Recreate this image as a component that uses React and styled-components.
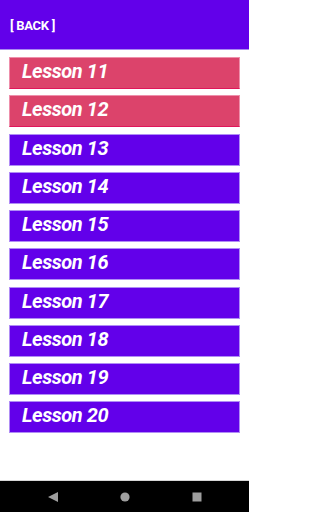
import React from 'react'
import styled, { createGlobalStyle } from 'styled-components'

const GlobalStyle = createGlobalStyle`
  html, body {
    margin: 0;
    padding: 0;
    background: #ffffff;
  }
  body {
    font-family: Roboto, "Noto Sans", sans-serif;
  }
`;

const Screen = styled.div`
  width: 249px;
  height: 512px;
  display: flex;
  flex-direction: column;
  background: #ffffff;
  overflow: hidden;
`;

const Header = styled.div`
  height: 50px;
  flex-shrink: 0;
  background: #6200ea;
  display: flex;
  align-items: center;
  padding-left: 10px;
  border-bottom: 1px solid #a98af0;
  box-sizing: border-box;
`;

const BackButton = styled.span`
  color: #ffffff;
  font-size: 13px;
  font-weight: 700;
  letter-spacing: -0.3px;
  margin-top: 1px;
`;

const List = styled.div`
  flex: 1;
  display: flex;
  flex-direction: column;
  gap: 6.25px;
  padding: 7px 9px 0 9px;
`;

const Lesson = styled.div`
  height: 32px;
  box-sizing: border-box;
  background: ${p => (p.done ? '#dc436b' : '#6200ea')};
  border: 1px solid ${p => (p.done ? '#ee8fab' : '#b08df5')};
  border-bottom-color: ${p => (p.done ? '#e0165a' : '#b08df5')};
  display: flex;
  align-items: center;
  padding: 0 0 4px 12px;
  color: #ffffff;
  font-size: 20px;
  font-weight: 700;
  font-style: italic;
  letter-spacing: -0.4px;
`;

const NavBar = styled.div`
  height: 31px;
  flex-shrink: 0;
  background: #000000;
  border-top: 1px solid #d6d6d6;
  display: flex;
  align-items: center;
  justify-content: center;
  gap: 62px;
`;

const Back = () => (
  <svg width="10" height="10" viewBox="0 0 10 10">
    <polygon points="10,0 10,10 0,5" fill="#9e9e9e" />
  </svg>
);

const Home = () => (
  <svg width="10" height="10" viewBox="0 0 10 10">
    <circle cx="5" cy="5" r="4.6" fill="#9e9e9e" />
  </svg>
);

const Recents = () => (
  <svg width="10" height="10" viewBox="0 0 10 10">
    <rect x="0.5" y="0.5" width="9" height="9" fill="#9e9e9e" />
  </svg>
);

const lessons = [11, 12, 13, 14, 15, 16, 17, 18, 19, 20];

const App = () => {
  return (
    <Screen>
      <GlobalStyle />
      <Header>
        <BackButton>[ BACK ]</BackButton>
      </Header>
      <List>
        {lessons.map(n => (
          <Lesson key={n} done={n < 13}>Lesson {n}</Lesson>
        ))}
      </List>
      <NavBar>
        <Back />
        <Home />
        <Recents />
      </NavBar>
    </Screen>
  )
}

export default App
